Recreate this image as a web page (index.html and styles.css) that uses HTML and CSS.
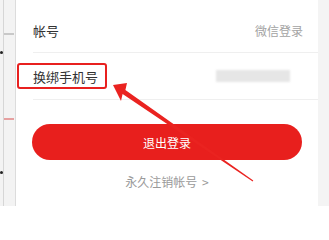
FILE: index.html
```html
<!DOCTYPE html>
<html lang="zh-CN">
<head>
<meta charset="utf-8">
<link rel="stylesheet" href="styles.css">
</head>
<body>
<div class="page">
  <div class="side-left">
    <span class="dot dot-a"></span>
    <span class="dot dot-b"></span>
    <span class="mark mark-a"></span>
    <span class="mark mark-b"></span>
  </div>
  <div class="main">
    <div class="row row-first">
      <span class="label">帐号</span>
      <span class="value">微信登录</span>
    </div>
    <div class="row">
      <span class="label">换绑手机号</span>
      <span class="blur"></span>
    </div>
    <div class="actions">
      <button class="logout">退出登录</button>
      <div class="cancel">永久注销帐号 <span class="chev">&gt;</span></div>
    </div>
  </div>
  <div class="side-right"></div>
  <div class="highlight"></div>
  <svg class="arrow" width="329" height="206" viewBox="0 0 329 206">
    <polygon fill="#ea2320" points="113,85 127,83 125.4,89.9 253.3,180.6 252.7,181.4 122.6,94.1 121,101"/>
  </svg>
</div>
</body>
</html>
```

FILE: styles.css
```css
* { box-sizing: border-box; }
html, body { margin: 0; padding: 0; }
body {
  width: 329px;
  height: 206px;
  overflow: hidden;
  background: #fff;
  font-family: "Noto Sans CJK SC", "Noto Sans", sans-serif;
}
.page {
  position: relative;
  display: flex;
  width: 329px;
  height: 206px;
}
.side-left {
  position: relative;
  width: 16px;
  background: #f3f3f3;
  border-right: 1px solid #dcdcdc;
}
.side-left::before {
  content: "";
  position: absolute;
  left: 3px;
  top: 0;
  bottom: 0;
  width: 1px;
  background: #d6d6d6;
}
.dot {
  position: absolute;
  left: 0;
  width: 3px;
  height: 3px;
  border-radius: 50%;
  background: #222;
}
.dot-a { top: 51px; }
.dot-b { top: 171px; }
.mark {
  position: absolute;
  left: 4px;
  width: 10px;
  height: 2px;
  background: #c8c8c8;
}
.mark-a { top: 33px; }
.mark-b { top: 118px; background: #e6a0a0; }
.main {
  flex: 1;
  background: #fff;
  display: flex;
  flex-direction: column;
}
.side-right {
  width: 11px;
  background: #f4f4f4;
}
.row {
  margin-left: 17px;
  height: 47px;
  display: flex;
  align-items: center;
  justify-content: space-between;
  padding-right: 15px;
  border-bottom: 1px solid #efefef;
}
.row-first {
  height: 53px;
  padding-top: 9px;
}
.label {
  font-size: 13px;
  color: #333;
  line-height: 16px;
}
.row + .row .label { padding-top: 2px; }
.value {
  font-size: 12px;
  color: #a3a3a3;
  line-height: 16px;
}
.blur {
  width: 74px;
  height: 12px;
  margin-right: 13px;
  background: #e6e6e6;
  filter: blur(1.2px);
}
.actions {
  display: flex;
  flex-direction: column;
  align-items: center;
  padding: 24px 16px 0 16px;
}
.logout {
  width: 100%;
  height: 36px;
  border: none;
  border-radius: 18px;
  background: #e81f1d;
  color: #fff;
  font-family: inherit;
  font-size: 12px;
  padding: 0;
}
.cancel {
  margin-top: 14px;
  font-size: 12px;
  line-height: 16px;
  color: #9a9a9a;
}
.chev { margin-left: 2px; }
.highlight {
  position: absolute;
  left: 17px;
  top: 63px;
  width: 90px;
  height: 26px;
  border: 2px solid #e8201f;
  border-radius: 3px;
}
.arrow {
  position: absolute;
  left: 0;
  top: 0;
}
```
